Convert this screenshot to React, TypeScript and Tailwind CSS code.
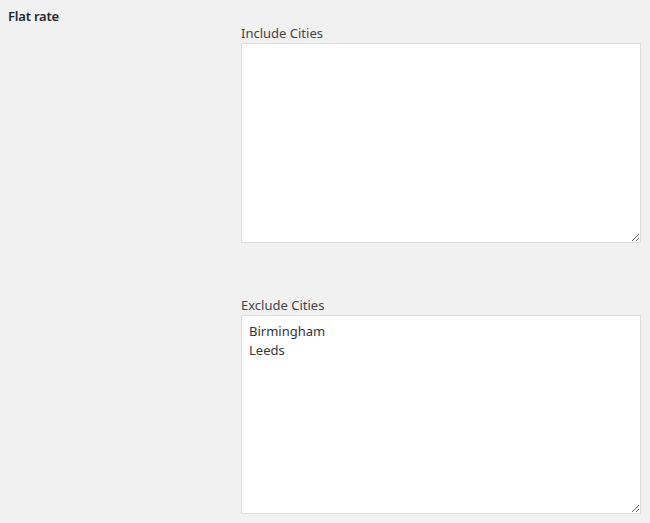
export default function App() {
  return (
    <div className="min-h-[523px] w-[650px] bg-[#f1f1f1] text-[#23282d]" style={{ fontFamily: '"Noto Sans", "Open Sans", sans-serif' }}>
      <div className="flex">
        <div className="w-[241px] shrink-0 pl-2 pt-[6px]">
          <div className="text-[13px] font-semibold leading-[20px] tracking-[-0.2px]">Flat rate</div>
        </div>
        <div className="flex flex-col pt-[24px]">
          <label className="text-[13px] leading-[19px] text-[#444]">Include Cities</label>
          <textarea
            readOnly
            defaultValue=""
            className="block h-[200px] w-[400px] border border-[#dddddd] bg-white px-[6px] py-[4px] text-[14px] leading-[20px] text-[#32373c] outline-none"
          />
          <label className="mt-[53px] text-[13px] leading-[19px] text-[#444]">Exclude Cities</label>
          <textarea
            readOnly
            defaultValue={"Birmingham\nLeeds"}
            className="block h-[199px] w-[400px] border border-[#dddddd] bg-white px-[7px] pt-[6px] pb-[4px] text-[13px] leading-[19px] text-[#32373c] outline-none"
          />
        </div>
      </div>
    </div>
  );
}
